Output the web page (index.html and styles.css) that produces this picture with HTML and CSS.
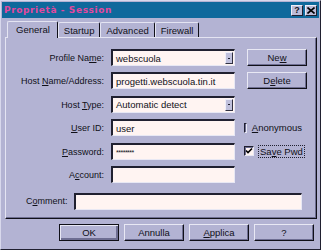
FILE: index.html
```html
<!DOCTYPE html>
<html lang="it">
<head>
    <meta charset="UTF-8">
    <title>Proprietà - Session</title>
    <link rel="stylesheet" href="styles.css">
</head>
<body>
    <div class="window">
        <div class="titlebar">
            <span class="title">Proprietà - Session</span>
            <div class="tb-buttons">
                <span class="tb-btn">?</span>
                <span class="tb-btn close">
                    <svg width="8" height="7" viewBox="0 0 8 7"><path d="M0.5,0.5 L7.5,6.5 M7.5,0.5 L0.5,6.5" stroke="#000" stroke-width="1.6"/></svg>
                </span>
            </div>
        </div>

        <div class="tabs">
            <div class="tab active">General</div>
            <div class="tab">Startup</div>
            <div class="tab">Advanced</div>
            <div class="tab">Firewall</div>
        </div>

        <div class="panel">
            <div class="form">
                <label class="lbl">Profile Na<u>m</u>e:</label>
                <div class="field combo"><span>webscuola</span><span class="drop"></span></div>
                <button class="btn">Ne<u>w</u></button>

                <label class="lbl">Host <u>N</u>ame/Address:</label>
                <div class="field"><span>progetti.webscuola.tin.it</span></div>
                <button class="btn">D<u>e</u>lete</button>

                <label class="lbl">Host <u>T</u>ype:</label>
                <div class="field combo"><span>Automatic detect</span><span class="drop"></span></div>
                <div></div>

                <label class="lbl"><u>U</u>ser ID:</label>
                <div class="field"><span>user</span></div>
                <div class="check"><span class="box"></span><span><u>A</u>nonymous</span></div>

                <label class="lbl"><u>P</u>assword:</label>
                <div class="field"><span class="pwd">********</span></div>
                <div class="check"><span class="box checked">
                    <svg width="8" height="8" viewBox="0 0 8 8"><path d="M1,3.5 L3,5.5 L7,1.5" fill="none" stroke="#000" stroke-width="1.6"/></svg>
                </span><span class="focus">Sa<u>v</u>e Pwd</span></div>

                <label class="lbl">A<u>c</u>count:</label>
                <div class="field"></div>
                <div></div>
            </div>

            <div class="comment-row">
                <label class="lbl-left">C<u>o</u>mment:</label>
                <div class="field wide"></div>
            </div>
        </div>

        <div class="actions">
            <button class="btn default">OK</button>
            <button class="btn">Annulla</button>
            <button class="btn"><u>A</u>pplica</button>
            <button class="btn">?</button>
        </div>
    </div>
</body>
</html>
```

FILE: styles.css
```css
body {
    margin: 0;
    font-family: "Liberation Sans", Arial, sans-serif;
    font-size: 9px;
    color: #101018;
}
.window {
    width: 321px;
    height: 250px;
    box-sizing: border-box;
    background: #b3b3d3;
    border: 1px solid;
    border-color: #d8d8ec #202030 #202030 #d8d8ec;
    padding: 1px 1px 0 1px;
}
.titlebar {
    height: 16px;
    background: #0f699c;
    display: flex;
    align-items: center;
    justify-content: space-between;
    padding: 0 2px 0 2px;
}
.title {
    font-family: "DejaVu Sans", Verdana, sans-serif;
    font-weight: bold;
    font-size: 9px;
    letter-spacing: 0.6px;
    color: #e2489e;
}
.tb-buttons {
    display: flex;
    gap: 2px;
}
.tb-btn {
    width: 12px;
    height: 11px;
    box-sizing: border-box;
    background: #bcbcd8;
    border: 1px solid;
    border-color: #eeeef8 #202030 #202030 #eeeef8;
    font-weight: bold;
    font-size: 9px;
    line-height: 9px;
    text-align: center;
    display: flex;
    align-items: center;
    justify-content: center;
}
.tabs {
    display: flex;
    align-items: flex-end;
    height: 19px;
    padding-left: 5px;
}
.tab {
    height: 15px;
    box-sizing: border-box;
    padding: 2px 5px 0 5px;
    border: 1px solid;
    border-bottom: none;
    border-color: #e4e4f2 #101018 #101018 #e4e4f2;
    border-radius: 2px 2px 0 0;
    font-size: 9.5px;
}
.tab.active {
    height: 17px;
    padding: 2px 7px 0 8px;
    margin-bottom: -1px;
    background: #b3b3d3;
    position: relative;
    z-index: 1;
}
.panel {
    height: 182px;
    box-sizing: border-box;
    margin: 0 2px 0 3px;
    border: 1px solid;
    border-color: #e4e4f2 #101018 #101018 #e4e4f2;
    box-shadow: inset -1px -1px 0 #6e6e92;
    padding-top: 11px;
}
.form {
    display: grid;
    grid-template-columns: 98px 124px 60px;
    grid-auto-rows: 17px;
    column-gap: 7px;
    row-gap: 6.4px;
}
.form > :nth-child(3n) {
    margin-left: 5px;
}
.lbl {
    text-align: right;
    align-self: center;
    padding-top: 1px;
}
.field {
    box-sizing: border-box;
    height: 17px;
    background: #fff4f2;
    border-top: 2px solid #202030;
    border-left: 2px solid #202030;
    border-right: 1px solid #e8e8f4;
    border-bottom: 1px solid #e8e8f4;
    display: flex;
    align-items: center;
    justify-content: space-between;
    padding-left: 3px;
    font-size: 9.5px;
}
.combo {
    padding-right: 1px;
}
.drop {
    width: 8px;
    height: 12px;
    box-sizing: border-box;
    background: #c0c0dc;
    border: 1px solid;
    border-color: #eeeef8 #303040 #303040 #eeeef8;
    display: flex;
    align-items: center;
    justify-content: center;
}
.drop::after {
    content: "";
    width: 2px;
    height: 1px;
    background: #202030;
}
.pwd {
    font-size: 7px;
    letter-spacing: -0.5px;
    padding-top: 1px;
}
.btn {
    box-sizing: border-box;
    width: 60px;
    height: 17px;
    padding: 0;
    font-family: inherit;
    font-size: 9.5px;
    color: #101018;
    background: #b3b3d3;
    border: 1px solid;
    border-color: #e8e8f4 #101018 #101018 #e8e8f4;
    box-shadow: inset -1px -1px 0 #6e6e92;
}
.btn.default {
    border: 1px solid #101018;
    box-shadow: inset 1px 1px 0 #e8e8f4, inset -2px -2px 0 #6e6e92;
}
.check {
    display: flex;
    align-items: center;
    gap: 5px;
    margin-left: 2px !important;
    white-space: nowrap;
    font-size: 9.5px;
}
.box {
    width: 10px;
    height: 10px;
    box-sizing: border-box;
    background: #fff4f2;
    border-top: 1px solid #202030;
    border-left: 1px solid #202030;
    border-right: 1px solid #e8e8f4;
    border-bottom: 1px solid #e8e8f4;
    box-shadow: inset 1px 1px 0 #6e6e92;
    display: flex;
    align-items: center;
    justify-content: center;
}
.focus {
    outline: 1px dotted #202030;
    padding: 0 1px;
}
.comment-row {
    display: flex;
    align-items: center;
    margin-top: 10px;
    padding-left: 20px;
}
.lbl-left {
    width: 48px;
}
.field.wide {
    width: 228px;
}
.actions {
    display: flex;
    gap: 5px;
    padding-left: 57px;
    margin-top: 5px;
}
```
